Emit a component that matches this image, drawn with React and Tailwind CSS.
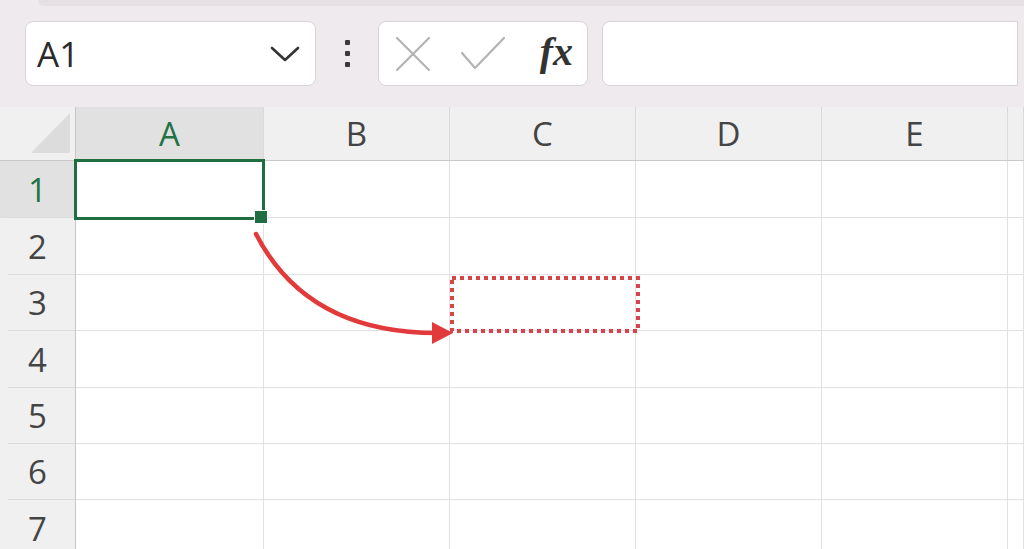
import React from "react";

const cols = [
  { label: "A", w: "w-[188px]", selected: true },
  { label: "B", w: "w-[186px]" },
  { label: "C", w: "w-[186px]" },
  { label: "D", w: "w-[186px]" },
  { label: "E", w: "w-[186px]" },
  { label: "", w: "flex-1" },
];

const rows = [
  { n: 1, h: "h-[57px]", selected: true },
  { n: 2, h: "h-[57px]" },
  { n: 3, h: "h-[56px]" },
  { n: 4, h: "h-[57px]" },
  { n: 5, h: "h-[56px]" },
  { n: 6, h: "h-[56px]" },
  { n: 7, h: "h-[57px]" },
];

const Toolbar = () => (
  <div className="h-[107px] bg-[#efeaee] relative">
    <div className="absolute top-0 left-[38px] right-0 h-[6px] bg-[#e6e0e4] rounded-bl-[8px]" />
    <div className="flex items-start pt-[21px] pl-[25px] pr-[6px]">
      {/* name box */}
      <div className="w-[291px] h-[65px] bg-white rounded-[8px] border border-[#d9d3d7] flex items-center pl-[11px] pr-[14px]">
        <span className="text-[35px] text-[#2a2a2a] leading-none">A1</span>
        <svg className="ml-auto" width="32" height="20" viewBox="0 0 32 20">
          <path d="M3 4 L16 16 L29 4" fill="none" stroke="#333" strokeWidth="2.6" strokeLinecap="round" strokeLinejoin="round" />
        </svg>
      </div>
      {/* more dots */}
      <div className="w-[62px] h-[65px] flex flex-col items-center justify-center gap-[6px]">
        <span className="w-[5px] h-[5px] bg-[#3a3a3a] rounded-[1px]" />
        <span className="w-[5px] h-[5px] bg-[#3a3a3a] rounded-[1px]" />
        <span className="w-[5px] h-[5px] bg-[#3a3a3a] rounded-[1px]" />
      </div>
      {/* cancel / enter / fx */}
      <div className="w-[210px] h-[65px] bg-white rounded-[8px] border border-[#d9d3d7] flex items-center pl-[16px] pr-[14px]">
        <svg width="36" height="36" viewBox="0 0 36 36">
          <path d="M2 2 L34 34 M34 2 L2 34" stroke="#b3b3b3" strokeWidth="2.2" strokeLinecap="round" />
        </svg>
        <svg className="ml-[28px]" width="48" height="36" viewBox="0 0 48 36">
          <path d="M3 17 L16 32 L45 2" fill="none" stroke="#b3b3b3" strokeWidth="2.2" strokeLinecap="round" strokeLinejoin="round" />
        </svg>
        <span className="ml-auto text-[40px] italic font-bold text-[#333] leading-none font-['Liberation_Serif',serif] pb-[4px]">
          fx
        </span>
      </div>
      {/* formula bar */}
      <div className="flex-1 ml-[14px] h-[65px] bg-white rounded-l-[8px] border border-[#d9d3d7]" />
    </div>
  </div>
);

const Grid = () => (
  <div className="bg-white">
    {/* column headers */}
    <div className="flex h-[54px] bg-[#f0f0f0] border-b border-[#c9c9c9]">
      <div className="w-[76px] border-r border-[#c6c6c6] relative">
        <svg className="absolute left-0 top-0" width="75" height="53" viewBox="0 0 75 53">
          <polygon points="31,46 70,6 70,46" fill="#dcdcdc" />
        </svg>
      </div>
      {cols.map((c) => (
        <div
          key={c.label || "f"}
          className={`${c.w} flex items-center justify-center border-r border-[#dadada] text-[33px] leading-none ${
            c.selected ? "bg-[#e1e1e1] text-[#217346]" : "text-[#444]"
          }`}
        >
          {c.label}
        </div>
      ))}
    </div>
    {/* rows */}
    {rows.map((r) => (
      <div key={r.n} className={`flex ${r.h}`}>
        <div className={`w-[76px] border-r border-[#c6c6c6] pl-[8px] ${r.selected ? "bg-[#e1e1e1]" : "bg-[#f0f0f0]"}`}>
          <div
            className={`h-full border-b border-[#dcdcdc] flex items-center justify-center pr-[8px] text-[33px] leading-none ${
              r.selected ? "text-[#217346]" : "text-[#444]"
            }`}
          >
            {r.n}
          </div>
        </div>
        {cols.map((c) => (
          <div key={c.label || "f"} className={`${c.w} border-r border-b border-[#e1e1e1]`} />
        ))}
      </div>
    ))}
  </div>
);

export default function App() {
  return (
    <div className="w-[1024px] h-[549px] overflow-hidden relative font-['Open_Sans','Noto_Sans',sans-serif]">
      <Toolbar />
      <Grid />
      {/* selected cell A1 */}
      <div className="absolute left-[74px] top-[159px] w-[191px] h-[61px] border-[3px] border-[#1e6e42]" />
      <div className="absolute left-[255px] top-[211px] w-[12px] h-[12px] bg-[#1e6e42] outline outline-1 outline-white" />
      {/* drag arrow and target */}
      <svg className="absolute left-0 top-0 pointer-events-none" width="1024" height="549" viewBox="0 0 1024 549">
        <rect x="452" y="278" width="186" height="53" fill="none" stroke="#d9434a" strokeWidth="4" strokeDasharray="4 4" />
        <path d="M256 234 C 290 300, 350 333, 437 333" fill="none" stroke="#e23a3a" strokeWidth="4.5" strokeLinecap="round" />
        <polygon points="432,322 453,333 432,344" fill="#e23a3a" strokeLinejoin="round" />
      </svg>
    </div>
  );
}
